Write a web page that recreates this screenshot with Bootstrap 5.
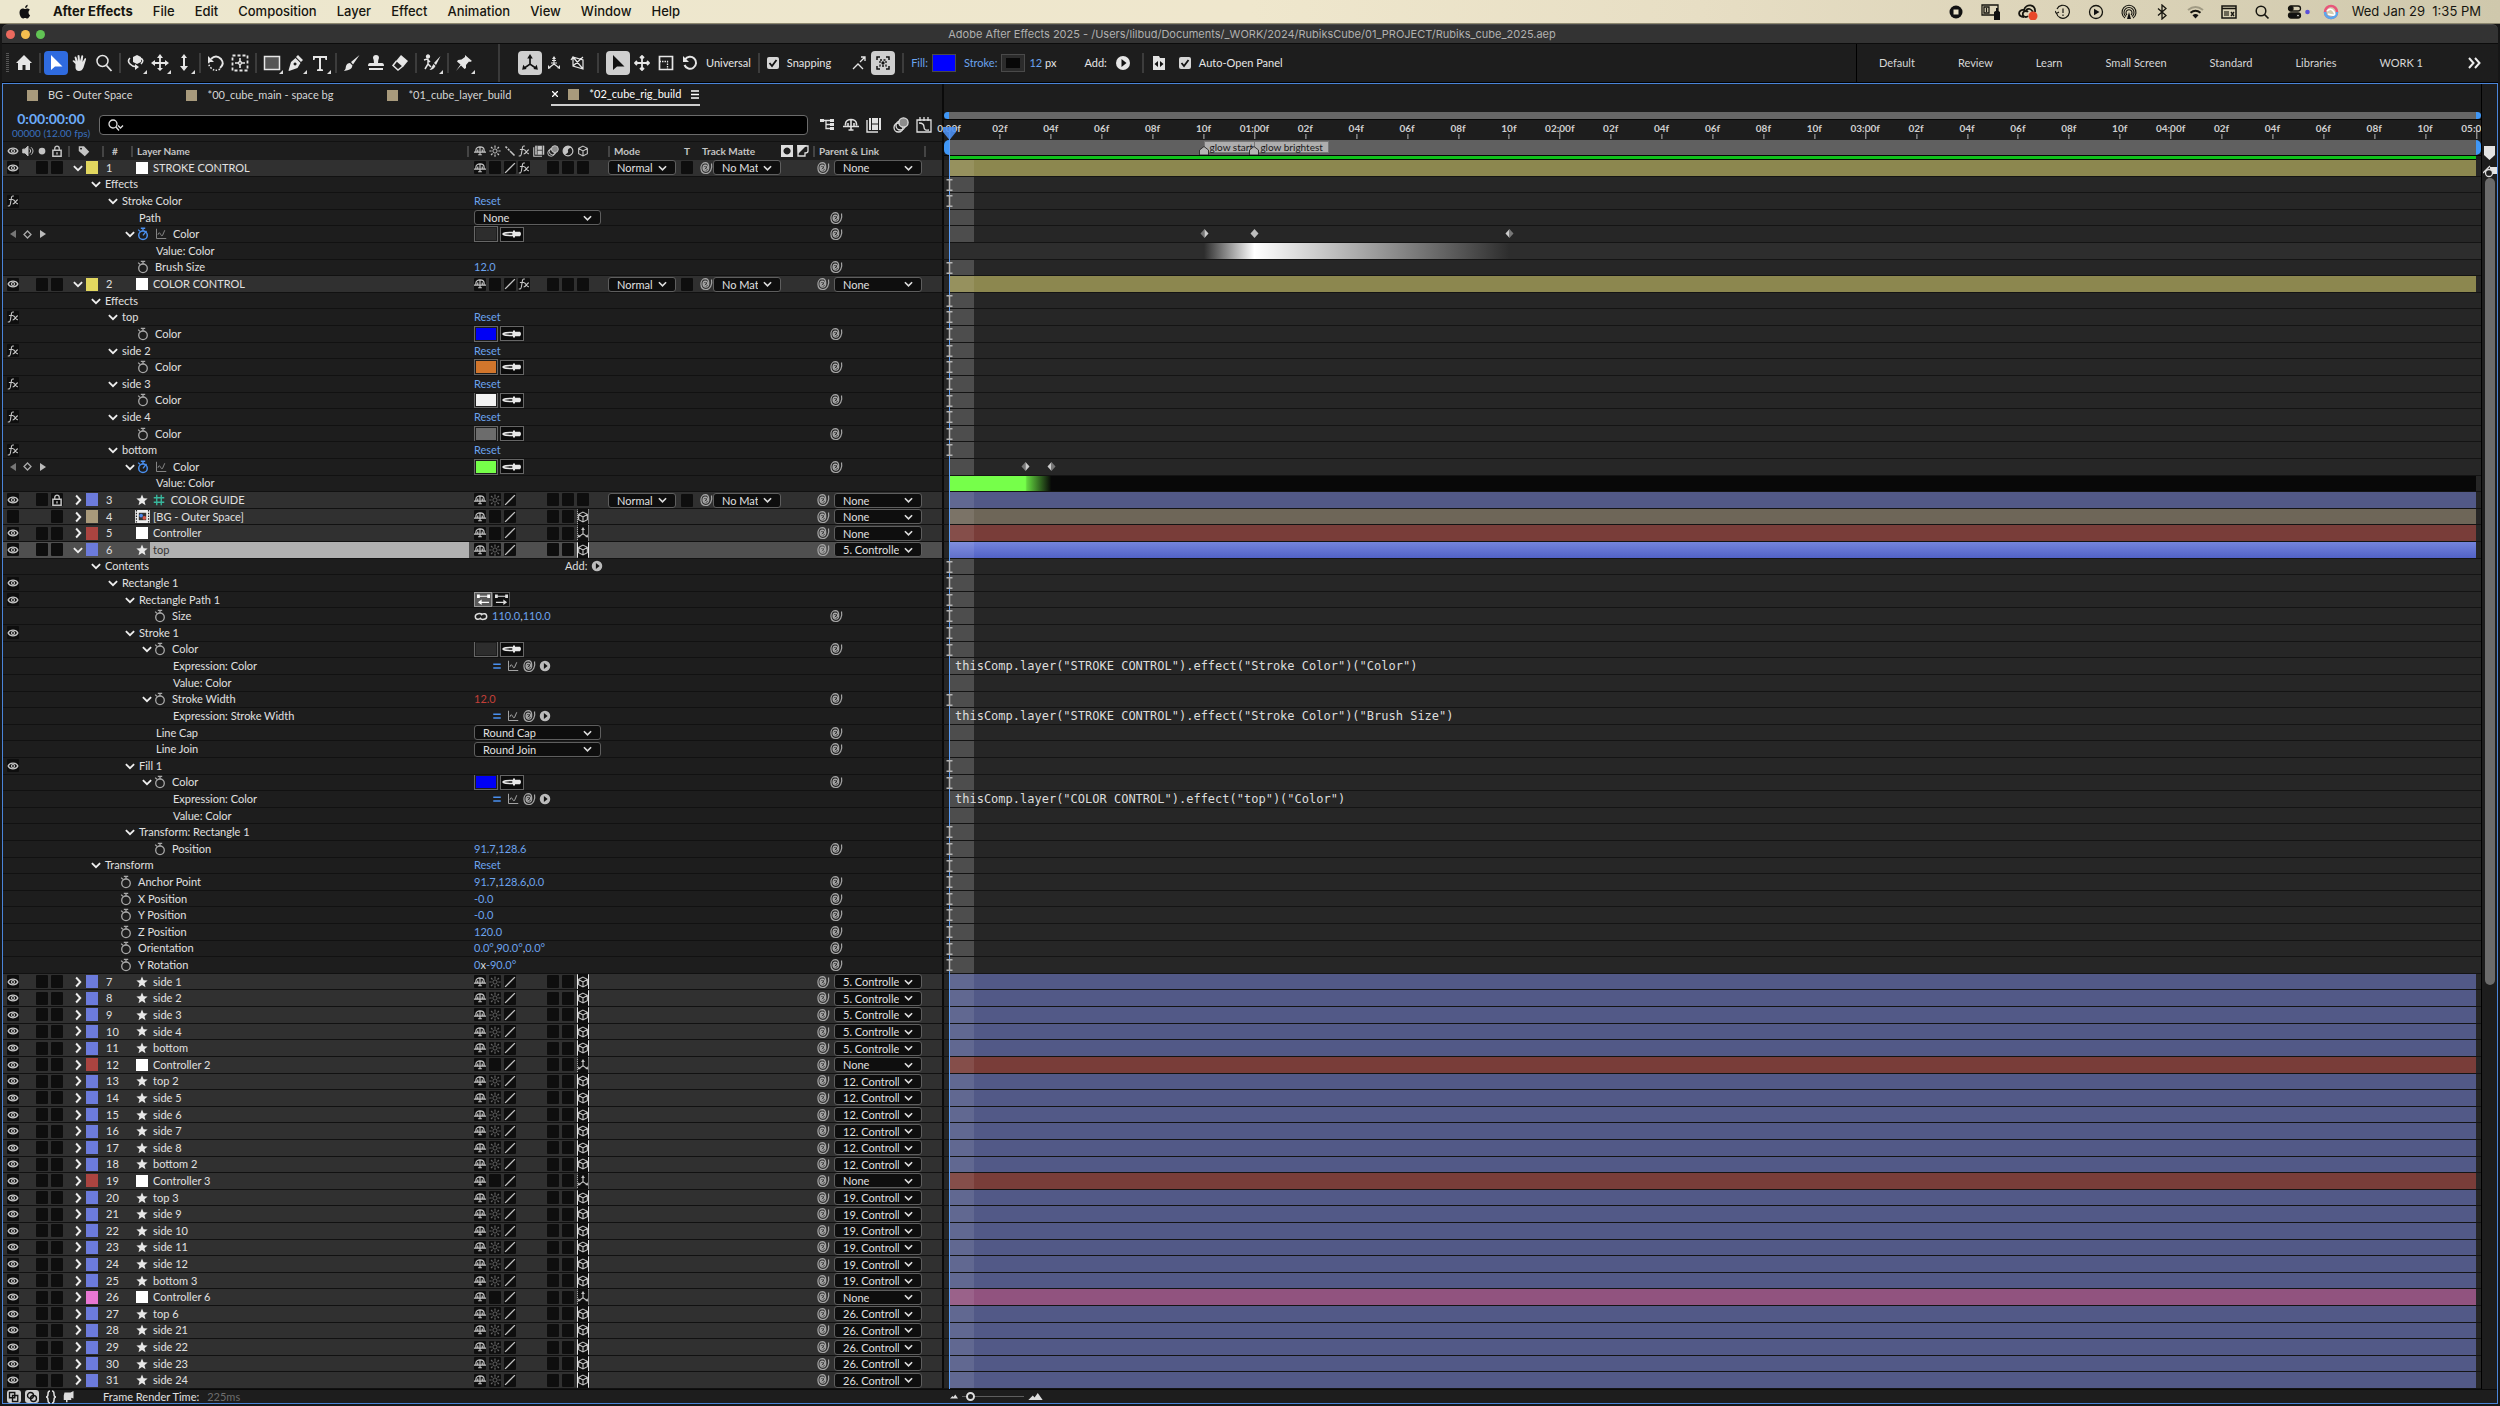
<!DOCTYPE html>
<html lang="en">
<head>
<meta charset="utf-8">
<meta name="viewport" content="width=device-width, initial-scale=1">
<title>Adobe After Effects 2025</title>
<link href="https://cdn.jsdelivr.net/npm/bootstrap@5.3.0/dist/css/bootstrap.min.css" rel="stylesheet">
<style>
:root{--ui:Lato,"Noto Sans",sans-serif;--sys:Inter,"Liberation Sans",sans-serif;--link:#6ba3ee;--left:939px}
html,body{height:100%}
body{background:#161616;color:#e0e0e0;font:11px/16px var(--ui);overflow:hidden}
button,select,input{font:inherit;color:inherit}
button{background:none;border:0;padding:0;display:inline-flex;align-items:center;justify-content:center;flex:none}
a{color:var(--link);text-decoration:none}
svg{display:block;flex:none;fill:none;stroke:currentColor;stroke-width:1.3}
.ic{width:16px;height:16px}
.ic-s{width:12px;height:12px}
.ic-l{width:18px;height:18px}

.menubar{height:24px;padding:0 19px 0 17px;background:linear-gradient(90deg,#ece7ce,#efe7cd 50%,#e7dec4 68%,#cfc8ac);color:#16150f;font:500 13px/23px var(--sys);border-bottom:1px solid #8c876f;gap:20px}
.menubar a{color:inherit}
.menubar .tray{gap:17px}
.menubar .tray .end{gap:13px;font-weight:400}
.titlebar{height:20px;margin:0 2px;background:#333;border-top:1px solid #4a4a4a;border-radius:6px 6px 0 0;border-bottom:1px solid #0c0c0c;font:11px/18px var(--sys);color:#b0b0b0}
.lights{gap:6px;padding-left:4px;width:0}
.lights i{width:9px;height:9px;border-radius:50%;flex:none}

.toolbar{height:39px;margin:0 2px;background:#1d1d1d;border-bottom:1px solid #000;color:#e6e6e6}
.toolbar .tool{width:24px;height:24px;border-radius:4px;position:relative}
.toolbar .tool.more::after{content:"";position:absolute;right:1px;bottom:1px;border:2px solid;border-color:transparent #ddd #ddd transparent}
.tool.on{background:#2f6bdf;color:#fff}
.tool.lit{background:#cfcfcf;color:#111}
.vsep{width:8px;height:20px;background:linear-gradient(#3c3c3c,#3c3c3c) center/2px 100% no-repeat;flex:none}
.grip{width:10px;height:20px;background:repeating-linear-gradient(#555 0 1px,transparent 1px 2px) center/3px 100% no-repeat}
.vbar{width:2px;align-self:stretch;background:#3a3a3a;margin:0 18px 0 22px}
.chk{appearance:none;width:12px;height:12px;border-radius:2px;margin:0;background:#d6d6d6 url("data:image/svg+xml,%3Csvg xmlns='http://www.w3.org/2000/svg' viewBox='0 0 12 12'%3E%3Cpath d='M2.500 6l2.500 3 4.500-6' fill='none' stroke='%23111' stroke-width='1.800'/%3E%3C/svg%3E");flex:none}
.bigsw{width:24px;height:18px;border:1px solid #4a4a4a}
.spaces{border-left:1px solid #000;padding-left:22px;gap:43px;align-self:stretch}
.spaces a{color:#d6d6d6}

.panel{margin:0 2px 2px;border:1px solid #4a84d8;background:#1d1d1d;min-height:0}
.leftcol{width:var(--left);flex:none}
.tabs{height:24px;padding-left:24px}
.tabs .comp{width:11px;height:11px;background:#a89a7c;flex:none}
.tabs a{color:#d6d6d6;gap:10px;height:22px}
.tabs a+a{margin-left:54px}
.tabs a.cur{color:#fff;border-bottom:2px solid #cfcfcf;padding:0 1px;margin-left:40px}
.srow{height:33px}
.tc{width:96px;text-align:center;color:#6cabf8}
.tc b{font-size:14px;line-height:17px;font-weight:700}
.tc .fps{font-size:10px;line-height:12px;color:#3a70bf}
.search{width:709px;height:20px;border:1px solid #6b6b6b;border-radius:4px;background:#000}
.search input{background:none;border:0;outline:0;width:100%;height:16px;padding:0 4px}
.hdr{height:19px;border-top:1px solid #111;font-size:10px;font-weight:700;color:#c4c4c4}
.hsep{width:2px;height:11px;background:#444;flex:none}

.line{flex:1 1 0;min-height:0}
.line>.leftcol{border-bottom:1px solid #111;background:#1d1d1d;overflow:hidden}
.line.layer>.leftcol{background:#303030}
.line.sel>.leftcol{background:#4f4f4f}
.av{width:58px;margin-left:3px;flex:none}
.av>*,.sws>*{flex:1 1 0;min-width:0;display:flex;align-items:center;justify-content:center}
.sws{width:117px;flex:none}
.bx{width:12px;height:13px;background:#0e0e0e;border-radius:1px;display:flex;align-items:center;justify-content:center;color:#c4c4c4;flex:none}
.bx.dim{color:#666}
.tw{width:14px;height:14px;margin-left:7px;color:#eee}
.lb{width:12px;height:13px;flex:none;margin-left:1px}
.num{width:36px;padding-left:8px;flex:none}
.lic{width:16px;flex:none;display:flex;justify-content:center;color:#e8e8e8}
.nul{width:12px;height:12px;background:#fff}
.nm{flex:1;min-width:0;padding-left:3px;white-space:nowrap;align-self:stretch;display:flex;align-items:center;gap:3px;margin-right:4px}
.sel .nm{background:#b0b0b0;color:#333}
.c3{position:relative;height:16px;border:solid #e6e6e6;border-width:0 1px}
.c3.dot{border-style:dotted}
.modes{width:173px;margin-left:18px;flex:none}
.tb{width:22px;justify-content:center;flex:none}
.par{width:127px;margin-left:34px;flex:none}
.hdr .par{width:143px;margin-left:0}
.sp{color:#a6a6a6}
.dd{appearance:none;height:15px;border:1px solid #5e5e5e;border-radius:3px;background:#0e0e0e url("data:image/svg+xml,%3Csvg xmlns='http://www.w3.org/2000/svg' viewBox='0 0 10 6'%3E%3Cpath d='M1 1l4 4 4-4' fill='none' stroke='%23ddd' stroke-width='1.800'/%3E%3C/svg%3E") right 8px center/9px 6px no-repeat;color:#e0e0e0;padding:0 22px 0 8px;line-height:13px;flex:none;overflow:hidden}
.dd.m{width:68px}.dd.p{width:88px}.dd.w{width:127px}
.tree{flex:1;min-width:0;white-space:nowrap}
.gut{width:18px;flex:none;display:flex;justify-content:center;color:#eee}
.sw{width:14px;margin-left:-3px;margin-right:5px;color:#a8a8a8;flex:none}
.sw.key{color:#4a90f0}
.val{width:354px;flex:none;color:#ddd;white-space:nowrap}
.val button{color:var(--link)}
.val .red{color:#c23f38}
.val .cs{width:24px;height:16px;border:1px solid #666;padding:1px;background:#1d1d1d;margin-right:2px}
.cs i{display:block;width:100%;height:100%}
.val .ed{width:24px;height:15px;border:1px solid #666;background:#0b0b0b;color:#e8e8e8}
.val .pt{width:18px;height:15px;border:1px solid #555;background:#111;color:#ddd}
.val .pt.on{background:#5a5a5a;border-color:#999;color:#fff}
.val .exb{width:16px;color:#a8a8a8;justify-content:center}
.val .go{color:#bbb}
.spc{width:16px;flex:none;color:#a6a6a6;margin-right:98px}

.track{flex:1;min-width:0;border-left:2px solid #0a0a0a;border-bottom:1px solid #141414;background:#262626;padding:0 5px;position:relative}
.canvas{flex:1;position:relative;align-self:stretch}
.cell{position:absolute;left:0;top:0;bottom:0;width:calc(100%/60);background:rgba(255,255,255,.18)}
.fill .cell{background:rgba(255,255,255,.09)}
.ib{position:absolute;left:-3px;top:2px;width:7px;height:12px;color:#b4b4b4;z-index:4}
.kf{position:absolute;top:3px;width:9px;height:9px;margin-left:-4px;color:#bdbdbd}
.expr{position:relative;padding-left:6px;font:12px/16px "DejaVu Sans Mono",monospace;color:#ddd;white-space:pre}
.ramp{background:linear-gradient(90deg,#2d2d2d 16.7%,#fff 20%,#2d2d2d 36.7%)}
.ramp2{background:linear-gradient(90deg,#76ff4a 5%,#62d63e 5.1%,#080808 6.7%)}

.rcol{flex:1;min-width:0;position:relative;clip-path:inset(0 0 0 -10px);border-left:2px solid #0a0a0a}
.nav1{height:8px;margin:28px 0 0;background:#1d1d1d}
.nav1 i,.wa i{background:#3f97f7;width:5px;flex:none}
.nav1 b,.wa b{flex:1;background:#666}
.wa b{background:#606060}
.nav1,.wa,.green{border-bottom:1px solid #050505}
.ruler{height:20px;margin:0 5px;position:relative;font-size:10px;font-weight:700;color:#d0d0d0}
.tick{position:absolute;top:0;transform:translateX(-50%);line-height:17px;height:20px}
.tick::after{content:"";position:absolute;left:50%;bottom:1px;height:5px;width:1px;background:#bbb}
.tick.s::after{height:9px}
.wa{height:16px;position:relative}
.mk{position:absolute;top:1px;height:12px;background:#aeaeae;border:1px solid #777;color:#1a1a1a;font-size:10px;line-height:10px;padding:0 5px;white-space:nowrap}
.mkp{position:absolute;top:6px;width:10px;height:9px;margin-left:-5px}
.green{height:4px;margin:0 5px;background:#10c21c}
.head{position:absolute;left:946px;top:43px;bottom:14px;width:1px;background:#5a9cf5;z-index:3}
.head svg{position:absolute;left:-6px;top:0;width:13px;height:13px}
.gutter{width:16px;flex:none;border-left:1px solid #000}
.gutter .thumb{width:10px;height:65.7%;border-radius:5px;background:#6b6b6b}
.foot{height:14px;border-top:1px solid #0a0a0a}
.foot button{color:#ddd}
.foot .lit{background:#cfcfcf;color:#111;border-radius:3px;width:14px;height:13px}
.zoomer{appearance:none;width:62px;height:8px;background:linear-gradient(#5e5e5e,#5e5e5e) center/100% 1px no-repeat;margin:0 4px}
.zoomer::-webkit-slider-thumb{appearance:none;width:9px;height:9px;border-radius:50%;border:2px solid #ddd;background:#1d1d1d}
</style>
<script src="https://cdn.jsdelivr.net/npm/bootstrap@5.3.0/dist/js/bootstrap.bundle.min.js"></script>
</head>
<body class="d-flex flex-column">
<svg width="0" height="0" class="position-absolute" aria-hidden="true"><defs>
<symbol id="eye" viewBox="0 0 16 16"><path stroke-width="1.800" d="M1.500 8C4 3 12 3 14.500 8C12 13 4 13 1.500 8Z"/><circle cx="8" cy="8" r="2" stroke-width="1.600"/></symbol>
<symbol id="spk" viewBox="0 0 16 16"><path fill="currentColor" d="M1 5.500h3l4-4v13l-4-4H1Z"/><path d="M10 5c2 2 2 4 0 6M12 3c3.500 3 3.500 7 0 10"/></symbol>
<symbol id="dot" viewBox="0 0 16 16"><circle cx="8" cy="8" r="4.500" fill="currentColor" stroke="none"/></symbol>
<symbol id="lock" viewBox="0 0 16 16"><path d="M2.500 7h11v8h-11Z" stroke-width="2"/><path stroke-width="1.800" d="M5 7V4.500a3 3 0 0 1 6 0V7M8 9.500v3"/></symbol>
<symbol id="tag" viewBox="0 0 16 16"><path fill="currentColor" fill-rule="evenodd" stroke="none" d="M1 1.500h7L15 9l-6 6L1 8ZM4 3.500a1.300 1.300 0 1 0 .1 0Z"/></symbol>
<symbol id="dn" viewBox="0 0 16 16"><path stroke-width="2.400" d="M2.500 5.500L8 11l5.500-5.500"/></symbol>
<symbol id="rt" viewBox="0 0 16 16"><path stroke-width="2.600" d="M5.500 2L11 8l-5.500 6"/></symbol>
<symbol id="star" viewBox="0 0 16 16"><path fill="currentColor" stroke="none" d="M8 .5l2.100 5.200 5.400.4-4.200 3.500 1.400 5.400L8 12l-4.700 3 1.400-5.400L.5 6.100l5.400-.4Z"/></symbol>
<symbol id="cmp" viewBox="0 0 16 14"><path fill="#eee" stroke="none" d="M0 0h16v14H0Z"/><path stroke="#222" stroke-dasharray="1.500 1.500" d="M1.500 0v14M14.500 0v14"/><path fill="#333" stroke="none" d="M4 3h8v8H4Z"/><circle cx="6.500" cy="6" r="2" fill="#4a86e8" stroke="none"/><circle cx="10" cy="8.500" r="2" fill="#d2554a" stroke="none"/></symbol>
<symbol id="hash" viewBox="0 0 16 16"><path stroke="#38b79d" stroke-width="1.800" d="M5 1v14M11 1v14M1 5h14M1 11h14"/></symbol>
<symbol id="shy" viewBox="0 0 16 16"><path stroke-width="1.600" d="M2.500 8.500V7C2.500 1 13.500 1 13.500 7v1.500M0 9.500h16M8 2v11M5 6v3M11 6v3M5.500 13h5"/></symbol>
<symbol id="sun" viewBox="0 0 16 16"><circle cx="8" cy="8" r="2.800"/><path stroke-width="1.600" d="M8 .5v3M8 12.500v3M.5 8h3M12.500 8h3M2.700 2.700l2 2M11.300 11.300l2 2M13.300 2.700l-2 2M4.700 11.300l-2 2"/></symbol>
<symbol id="qual" viewBox="0 0 16 16"><path stroke-width="1.800" d="M1.500 14.500L14.500 1.500"/></symbol>
<symbol id="qh" viewBox="0 0 16 16"><path stroke-width="2.200" stroke-dasharray="3 1.500" d="M2 2l6 6"/><path stroke-width="2.200" d="M8 8l6 6"/></symbol>
<symbol id="fx" viewBox="0 0 16 16"><path stroke-width="1.500" d="M9 1.500C6 .5 6 3 5.500 6L4.500 12c-.5 2.500-1.500 3-3.500 2.500M2.500 6h5.500M8 6.500c2.500-1 3 6 6.500 5M14.500 6.500C12 6 11 12 7.500 12"/></symbol>
<symbol id="film" viewBox="0 0 16 16"><path d="M1 3v12h11" stroke-width="1.400"/><path fill="currentColor" stroke="none" d="M3 1h12v12H3Z"/><path stroke="#1d1d1d" d="M5.500 1v12M12.500 1v12M5.500 7h7" stroke-width="1"/><path stroke="currentColor" stroke-dasharray="1 1" d="M4 1v12M14 1v12"/></symbol>
<symbol id="mb" viewBox="0 0 16 16"><circle cx="5.500" cy="10.500" r="4.500"/><circle cx="7.500" cy="8.500" r="4.500"/><circle cx="10.500" cy="5.500" r="4.600" fill="#8d8d8d"/></symbol>
<symbol id="adj" viewBox="0 0 16 16"><circle cx="8" cy="8" r="6.500" stroke-width="1.600"/><path fill="currentColor" stroke="none" d="M3.400 12.600A6.500 6.500 0 0 1 12.600 3.400Q7 5 8 8T3.400 12.600Z"/></symbol>
<symbol id="cube" viewBox="0 0 16 16"><path stroke-width="1.500" d="M8 1.500l5.800 3v7L8 14.500l-5.800-3v-7ZM2.200 4.500L8 8l5.800-3.500M8 8v6.500"/></symbol>
<symbol id="ax" viewBox="0 0 16 16"><path stroke-width="1.500" d="M8 3v6M8 9l-5 3.500M8 9l5 3.500"/><path fill="currentColor" stroke="none" d="M8 0l2.500 4h-5ZM1 14l1-4.500 3 3.800ZM15 14l-1-4.500-3 3.800Z"/></symbol>
<symbol id="spi" viewBox="0 0 16 16"><path stroke-width="1.200" d="M8 7.200a1.200 1.200 0 1 0 .2 2C10.500 8.500 9.800 5.200 7.300 5.200C4.200 5.500 4.200 11 7.800 11.200C11.800 11 11.800 2.800 7.300 2.700C1.300 3 1.500 13.300 7.700 13.500C12.500 13.500 14.500 8 13.500 3.500"/></symbol>
<symbol id="stop" viewBox="0 0 14 16"><circle cx="7" cy="9.500" r="4.900" stroke-width="1.500"/><path stroke-width="1.500" d="M4.500 1.500h5M7 1.500v3M1.500 3l2 2"/></symbol>
<symbol id="stopk" viewBox="0 0 14 16"><circle cx="7" cy="9.500" r="4.900" stroke-width="1.700"/><path stroke-width="1.600" d="M4.500 1.500h5M7 1.500v3M1.500 3l2 2M7 9.500L11 4.500"/></symbol>
<symbol id="graph" viewBox="0 0 16 16"><path stroke-width="1.300" d="M2 1v13h13M4 9c2-8 4 4 6 1l3-7"/></symbol>
<symbol id="play" viewBox="0 0 16 16"><circle cx="8" cy="8" r="7" fill="currentColor" stroke="none"/><path fill="#111" stroke="none" d="M6.500 4l5 4-5 4Z"/></symbol>
<symbol id="eq" viewBox="0 0 16 16"><path stroke="#4a90f0" stroke-width="2" d="M3 5.500h10M3 10.500h10"/></symbol>
<symbol id="drop" viewBox="0 0 20 10"><path stroke-width="1.400" d="M1 5c1-1.500 3-1.500 10-1.500v3C4 6.500 2 6.500 1 5Z"/><path fill="currentColor" stroke="none" d="M11 1.500h2v1.300h5q2 2.200 0 4.400h-5v1.300h-2Z"/></symbol>
<symbol id="link" viewBox="0 0 16 10"><path stroke-width="1.700" d="M9.500 3C7.500 1 1.500 1 1.500 5S6 9 8 6.500M6.500 7C8.500 9 14.500 9 14.500 5S10 1 8 3.500"/></symbol>
<symbol id="pl" viewBox="0 0 16 14"><path stroke-width="1.300" d="M2 3.500h12M4 10h10"/><path fill="currentColor" stroke="none" d="M1 1.500h3v4H1ZM12 1.500h3v4h-3ZM2 10l4-3v6Z"/></symbol>
<symbol id="pr" viewBox="0 0 16 14"><path stroke-width="1.300" d="M2 3.500h12M2 10h10"/><path fill="currentColor" stroke="none" d="M1 1.500h3v4H1ZM12 1.500h3v4h-3ZM14 10l-4-3v6Z"/></symbol>
<symbol id="ibm" viewBox="0 0 7 12"><path stroke-width="1.500" d="M.5 .8h6M.5 11.200h6M3.500 1v10"/></symbol>
<symbol id="kl" viewBox="0 0 9 9"><path fill="#777" stroke="none" d="M4.500 0v9L.5 4.500Z"/><path fill="#ccc" stroke="none" d="M4.500 0v9l4-4.500Z"/></symbol>
<symbol id="kr" viewBox="0 0 9 9"><path fill="#ccc" stroke="none" d="M4.500 0v9L.5 4.500Z"/><path fill="#777" stroke="none" d="M4.500 0v9l4-4.500Z"/></symbol>
<symbol id="kd" viewBox="0 0 9 9"><path fill="#bdbdbd" stroke="none" d="M4.500 0l4 4.500-4 4.500-4-4.500Z"/></symbol>
<symbol id="mtn" viewBox="0 0 16 10"><path fill="#ddd" stroke="none" d="M0 9l5-5 2 2 3.500-5L16 9Z"/></symbol>
<symbol id="cursor" viewBox="0 0 18 18"><path fill="currentColor" stroke="none" d="M4 1v15l4-3.500h7.500Z"/></symbol>
</defs></svg>

<nav class="menubar d-flex align-items-center" aria-label="Menu bar">
  <svg class="ic" viewBox="0 0 16 16"><path fill="#111" stroke="none" d="M11.500 8.300c0-1.700 1.300-2.500 1.400-2.600-.8-1.100-2-1.300-2.400-1.300-1 0-2 .6-2.500.6S6.700 4.400 5.800 4.400C4.300 4.500 2.500 5.600 2.500 8.500c0 3 2 6 3.500 6 .8 0 1.100-.5 2.100-.5s1.300.5 2.100.5c1.300 0 2.500-2.100 2.900-3.300-1.100-.5-1.600-1.600-1.600-2.900ZM9.900 3.300C10.500 2.500 10.800 1.500 10.700.8c-.9 0-2.700 1-2.600 3.200.8 0 1.400-.3 1.800-.7Z"/></svg>
  <a href="#" class="fw-bold">After Effects</a><a href="#">File</a><a href="#">Edit</a><a href="#">Composition</a><a href="#">Layer</a><a href="#">Effect</a><a href="#">Animation</a><a href="#">View</a><a href="#">Window</a><a href="#">Help</a>
  <div class="tray d-flex align-items-center ms-auto">
    <svg class="ic" viewBox="0 0 16 16"><circle cx="8" cy="8" r="6.500" fill="#111" stroke="none"/><path fill="#e8e0c6" stroke="none" d="M5.500 5.500h5v5h-5Z"/></svg>
    <svg width="20" height="16" viewBox="0 0 20 16"><path d="M1 1h16v10H1ZM3 3h5v6H3ZM5.500 4v4"/><path fill="#111" stroke="none" d="M13 8q3-3 6 0v8h-6ZM15 4h2v3h-2Z"/></svg>
    <svg width="20" height="16" viewBox="0 0 20 16"><path stroke-width="1.800" d="M6 13C-1 13 0 5 6 6C8-1 18 0 17 8M10 8a3 3 0 1 0 0 4M8 6q4-3 7 2"/><circle cx="15" cy="12" r="4.500" fill="#e8482a" stroke="none"/></svg>
    <svg class="ic" viewBox="0 0 16 16"><path stroke-width="1.200" d="M2 5A6.500 6.500 0 1 1 1.500 9M0 7l1.500 2.500L4 8M8 4.500v4.500M8 10.500v1.500"/></svg>
    <svg class="ic" viewBox="0 0 16 16"><circle cx="8" cy="8" r="6.500"/><path fill="#111" stroke="none" d="M6 4.700l5.500 3.300L6 11.300Z"/></svg>
    <svg class="ic" viewBox="0 0 16 16"><path stroke-width="1.100" d="M4 14A7 7 0 1 1 12 14M5 12.500A5 5 0 1 1 11 12.500M6 11A3 3 0 1 1 10 11"/><path fill="#111" stroke="none" d="M8 8l2 7H6Z"/></svg>
    <svg class="ic" viewBox="0 0 16 16"><path d="M4 4.500l8 7-4 3.500V1l4 3.500-8 7"/></svg>
    <svg width="17" height="16" viewBox="0 0 17 16"><path stroke="#a19b84" stroke-width="2" d="M1 6q7.500-6 15 0"/><path stroke-width="2" d="M3.500 8.800q5-4 10 0"/><path fill="#111" stroke="none" d="M5.500 11.200q3-2.500 6 0L8.500 14.500Z"/></svg>
    <svg class="ic" viewBox="0 0 16 16"><path d="M1 2h14v12H1ZM1 4.500h14" stroke-width="1.500"/><path d="M10 8l3 4M13 8l-3 4"/><path fill="#6a6655" stroke="none" d="M3 7h5v5H3Z"/></svg>
    <svg class="ic" viewBox="0 0 16 16"><circle cx="7" cy="7" r="4.800" stroke-width="1.500"/><path stroke-width="1.700" d="M10.500 10.500l4 4"/></svg>
    <div class="end d-flex align-items-center">
      <svg width="23" height="16" viewBox="0 0 23 16"><rect x="1.500" y="2" width="12" height="5" rx="2.500"/><circle cx="4" cy="4.500" r="2" fill="#111"/><rect x="1.500" y="9" width="12" height="5" rx="2.500" fill="#111"/><circle cx="11" cy="11.500" r="1.500" fill="#ddd"/><circle cx="20.500" cy="8" r="2.300" fill="#5a50d8" stroke="none"/></svg>
      <svg class="ic" viewBox="0 0 16 16"><circle cx="8" cy="8" r="6" stroke="#e8557a" stroke-width="2.500"/><path stroke="#5aa8ee" stroke-width="2.500" d="M2 8a6 6 0 0 0 12 0"/><path stroke="#fff" stroke-width="1.600" d="M4 7q4-4 7 1t-6 2"/></svg>
      <span>Wed Jan 29&nbsp; 1:35 PM</span>
    </div>
  </div>
</nav>

<header class="titlebar d-flex align-items-center">
  <div class="lights d-flex"><i style="background:#ec6a5e"></i><i style="background:#f4be4f"></i><i style="background:#61c454"></i></div>
  <div class="flex-fill text-center">Adobe After Effects 2025 - /Users/lilbud/Documents/_WORK/2024/RubiksCube/01_PROJECT/Rubiks_cube_2025.aep</div>
</header>

<div class="toolbar d-flex align-items-center" role="toolbar" aria-label="Tools">
  <div class="grip"></div><div id="tools" class="d-flex align-items-center"></div>
  <div class="vbar"></div>
  <div class="d-flex align-items-center">
    <button class="tool lit" aria-label="Local axis"><svg class="ic-l" viewBox="0 0 16 16"><use href="#ax"/></svg></button>
    <button class="tool" aria-label="World axis"><svg class="ic" viewBox="0 0 16 16"><path stroke-width="1.200" d="M8 4v5M8 9l-4 3M8 9l4 3M5 8h6M6 5.500h4"/><path fill="currentColor" stroke="none" d="M8 1l2 3H6ZM2 14v-4l3 3ZM14 14v-4l-3 3Z"/></svg></button>
    <button class="tool" aria-label="View axis"><svg class="ic" viewBox="0 0 16 16"><path stroke-width="1.200" d="M3 2l10 3v9L3 11ZM3 11L13 2M3 2l10 12M1 5l2-3 3 1"/></svg></button>
    <div class="vsep mx-1"></div>
    <button class="tool lit" aria-label="Selection"><svg class="ic-l"><use href="#cursor"/></svg></button>
    <button class="tool" aria-label="Position"><svg class="ic" viewBox="0 0 16 16"><path stroke-width="1.800" d="M8 1v14M1 8h14M6 3l2-2 2 2M6 13l2 2 2-2M3 6L1 8l2 2M13 6l2 2-2 2"/></svg></button>
    <button class="tool" aria-label="Scale"><svg class="ic" viewBox="0 0 16 16"><path stroke-width="1.700" d="M1.500 1.500h13v13h-13Z"/><path d="M1.500 6.500h8v8" stroke-dasharray="1.500 1"/></svg></button>
    <button class="tool" aria-label="Rotation"><svg class="ic" viewBox="0 0 16 16"><path stroke-width="2" d="M3 4.500A6 6 0 1 1 2.500 10"/><path fill="currentColor" stroke="none" d="M1 1v6h6Z"/></svg></button>
    <span class="ms-1">Universal</span>
    <div class="vsep mx-1"></div>
    <input class="chk" type="checkbox" checked id="snap"><label class="ms-2" for="snap">Snapping</label>
    <button class="tool ms-3" aria-label="Snap along edges"><svg class="ic" viewBox="0 0 16 16"><path d="M2 14l5-5 5 5M9 7l5-5M10 2h4v4"/></svg></button>
    <button class="tool lit" aria-label="Snap to features"><svg class="ic" viewBox="0 0 16 16"><path stroke-width="1.500" d="M2 5V2h3M11 2h3v3M14 11v3h-3M5 14H2v-3"/><path stroke-dasharray="2 1.500" d="M5 5h6v6H5Z"/><circle cx="8" cy="8" r="1" fill="#111"/></svg></button>
    <div class="vsep mx-1"></div>
    <a href="#">Fill:</a><button class="bigsw ms-1" style="background:#00f" aria-label="Fill colour"></button>
    <a href="#" class="ms-2">Stroke:</a><button class="bigsw ms-1" style="background:#2b2b2b" aria-label="Stroke colour"><svg width="14" height="10"><path fill="#080808" stroke="none" d="M0 0h14v10H0Z"/></svg></button>
    <span class="ms-1"><a href="#">12</a> px</span>
    <span class="ms-4 ps-1">Add:</span><button class="tool ms-1" aria-label="Add"><svg class="ic"><use href="#play"/></svg></button>
    <div class="vsep ms-1"></div>
    <button class="tool" aria-label="Panel"><svg class="ic" viewBox="0 0 16 16"><path fill="#e2e2e2" stroke="none" d="M2 1h6l1 2h5v12H2Z"/><path fill="#111" stroke="none" d="M7 6v6L3.500 9ZM9 6v6l3.500-3Z"/></svg></button>
    <input class="chk ms-2" type="checkbox" checked id="auto"><label class="ms-2" for="auto">Auto-Open Panel</label>
  </div>
  <nav class="spaces d-flex align-items-center ms-auto pe-3" aria-label="Workspaces">
    <a href="#">Default</a><a href="#">Review</a><a href="#">Learn</a><a href="#">Small Screen</a><a href="#">Standard</a><a href="#">Libraries</a><a href="#">WORK 1</a>
    <button aria-label="More workspaces"><svg class="ic" viewBox="0 0 16 16"><path stroke="#eee" stroke-width="2" d="M3 3l4.500 5L3 13M9 3l4.500 5L9 13"/></svg></button>
  </nav>
</div>

<main class="panel flex-fill d-flex flex-column position-relative">
  <div class="d-flex">
    <div class="leftcol">
      <nav class="tabs d-flex" aria-label="Compositions">
        <a href="#" class="d-flex align-items-center"><i class="comp"></i>BG - Outer Space</a>
        <a href="#" class="d-flex align-items-center"><i class="comp"></i>*00_cube_main - space bg</a>
        <a href="#" class="d-flex align-items-center"><i class="comp"></i>*01_cube_layer_build</a>
        <a href="#" class="cur d-flex align-items-center"><svg width="6" height="6" viewBox="0 0 6 6"><path d="M0 0l6 6M6 0L0 6"/></svg><i class="comp"></i>*02_cube_rig_build<svg width="8" height="9" viewBox="0 0 8 9"><path d="M0 1h8M0 4.500h8M0 8h8"/></svg></a>
      </nav>
      <div class="srow d-flex align-items-center">
        <div class="tc d-flex flex-column"><b>0:00:00:00</b><span class="fps">00000 (12.00 fps)</span></div>
        <label class="search d-flex align-items-center ps-1"><svg class="ms-1" width="16" height="12" viewBox="0 0 16 12"><circle cx="5" cy="5" r="4"/><path d="M8 8l3 3.500M10 6.500l2.500 2.500L15 6.500"/></svg><input type="text" aria-label="Search layers"></label>
        <div class="d-flex ms-2 ps-1" style="gap:7px">
          <button aria-label="Mini-flowchart"><svg class="ic" viewBox="0 0 16 16"><path d="M1 3.500h9M6 3.500v8h4M6 7.500h4"/><path fill="currentColor" stroke="none" d="M0 2h4v3H0ZM10 2h4v3h-4ZM10 6h4v3h-4ZM10 10h4v3h-4Z"/></svg></button>
          <button aria-label="Hide shy layers"><svg class="ic"><use href="#shy"/></svg></button>
          <button aria-label="Frame blending"><svg class="ic"><use href="#film"/></svg></button>
          <button class="ms-1" aria-label="Motion blur"><svg class="ic"><use href="#mb"/></svg></button>
          <button aria-label="Graph editor"><svg class="ic" viewBox="0 0 16 16"><path d="M1 3h14v12H1ZM4 0v4M8 0v4M12 0v4M3 6q5 0 5 4t5 3"/></svg></button>
        </div>
      </div>
      <div class="hdr d-flex align-items-center">
        <div class="av d-flex"><span><svg class="ic-s"><use href="#eye"/></svg></span><span><svg class="ic-s"><use href="#spk"/></svg></span><span><svg class="ic-s"><use href="#dot"/></svg></span><span><svg class="ic-s"><use href="#lock"/></svg></span></div>
        <div class="d-flex align-items-center" style="width:67px"><i class="hsep ms-1"></i><svg class="ic-s ms-2 me-2"><use href="#tag"/></svg><i class="hsep ms-1"></i><span class="ms-1 ps-1">#</span></div>
        <div class="d-flex align-items-center flex-fill"><i class="hsep me-1"></i><span class="flex-fill">Layer Name</span><i class="hsep me-1"></i></div>
        <div class="sws d-flex"><span><svg class="ic-s"><use href="#shy"/></svg></span><span><svg class="ic-s"><use href="#sun"/></svg></span><span><svg class="ic-s"><use href="#qh"/></svg></span><span><svg class="ic-s"><use href="#fx"/></svg></span><span><svg class="ic-s"><use href="#film"/></svg></span><span><svg class="ic-s"><use href="#mb"/></svg></span><span><svg class="ic-s"><use href="#adj"/></svg></span><span><svg class="ic-s"><use href="#cube"/></svg></span></div>
        <div class="modes d-flex align-items-center"><span class="d-flex align-items-center" style="width:68px"><i class="hsep me-1"></i>Mode</span><span class="tb d-flex">T</span><span class="ps-1">Track Matte</span></div>
        <div class="par d-flex align-items-center"><svg class="ic-s" viewBox="0 0 12 12"><path fill="#ddd" stroke="none" fill-rule="evenodd" d="M0 0h12v12H0ZM6 2.500a3.500 3.500 0 1 0 .1 0Z"/></svg><svg class="ic-s ms-1" viewBox="0 0 12 12"><path stroke="#ddd" d="M1 1h10v5q0 2-3 2v3H1Z"/><path fill="#ddd" stroke="none" d="M0 0h10L1 9Z"/></svg><i class="hsep ms-1"></i><span class="ms-1 flex-fill">Parent &amp; Link</span></div>
        <i class="hsep me-3"></i>
      </div>
    </div>
    <div class="rcol">
      <div class="nav1 d-flex"><i class="rounded-start-pill"></i><b></b><i class="rounded-end-pill"></i></div>
      <div class="ruler" id="ruler"></div>
      <div class="wa d-flex"><i class="rounded-start"></i><b class="position-relative fw-normal" id="marks"></b><i class="rounded-end"></i></div>
      <div class="green"></div>
    </div>
    <div class="gutter d-flex flex-column align-items-center justify-content-end"><svg width="11" height="14" viewBox="0 0 11 14"><path fill="#e4e4e4" stroke="none" d="M0 0h11v9l-5.500 5L0 9Z"/></svg></div>
  </div>
  <div class="d-flex flex-fill" style="min-height:0">
    <div id="rows" class="flex-fill d-flex flex-column" style="min-width:0"></div>
    <div class="gutter d-flex flex-column align-items-center"><svg width="14" height="14" viewBox="0 0 14 14" class="mt-1"><path fill="#e4e4e4" stroke="none" d="M7 3h7v7H7Z"/><circle cx="6" cy="9" r="3.500" fill="#1d1d1d" stroke="#ddd"/><path d="M0 9l7-7" stroke="#ddd"/></svg><div class="thumb"></div></div>
  </div>
  <footer class="foot d-flex align-items-center">
    <div class="leftcol d-flex align-items-center ps-1">
    <button class="lit" aria-label="Switches"><svg class="ic-s" viewBox="0 0 16 16"><path stroke-width="1.800" d="M2 2h7v7H2ZM6 6h7v8H6Z"/></svg></button>
    <button class="lit ms-1" aria-label="Transfer controls"><svg class="ic-s" viewBox="0 0 16 16"><circle cx="6" cy="6" r="4" stroke-width="1.800"/><circle cx="10" cy="10" r="4" stroke-width="1.800"/></svg></button>
    <button class="ms-1" aria-label="In, out, duration"><svg class="ic" viewBox="0 0 16 16"><path stroke-width="1.500" d="M7 2Q5 2 5 5T3 8q2 0 2 3t2 3M9 2q2 0 2 3t2 3q-2 0-2 3t-2 3"/></svg></button>
    <button class="ms-1" aria-label="Render time"><svg class="ic-s" viewBox="0 0 16 16"><path fill="currentColor" stroke="none" d="M2 2h8l4-2v10l-3-1v3H6v3H4v-3H1V6Z"/></svg></button>
    <span class="ps-4 ms-1">Frame Render Time:</span><span class="ms-2" style="color:#6d6d6d">225ms</span>
    </div>
    <div class="d-flex align-items-center ms-2"><svg width="8" height="5"><use href="#mtn"/></svg><input class="zoomer" type="range" min="0" max="100" value="7" aria-label="Timeline zoom"><svg width="15" height="9"><use href="#mtn"/></svg></div>
  </footer>
  <div class="head"><svg viewBox="0 0 13 13"><path fill="#4c8ff0" fill-opacity=".9" stroke="none" d="M0 0h13v5L6.500 13 0 5Z"/></svg></div>
</main>

<script>
const ic=(n,c='ic-s')=>`<svg class="${c}"><use href="#${n}"/></svg>`;

/* main tools */
const T=(label,body,cls='')=>`<button class="tool ${cls}" aria-label="${label}"><svg class="ic-l" viewBox="0 0 18 18">${body}</svg></button>`, S='<div class="vsep"></div>';
document.getElementById('tools').innerHTML=[
T('Home','<path fill="currentColor" stroke="none" d="M9 1l8 8h-2v7h-4.500v-5h-3v5H3V9H1Z"/>'),S,
T('Selection','<use href="#cursor"/>','on'),
T('Hand','<path fill="currentColor" stroke="none" d="M4.500 10L1.500 7q1-1.500 3 .5L3.500 3q1.500-1 2 .5L7 7.500l-.5-6q1.500-1 2 0L9 7l1.500-5.500q1.500-.5 1.700.8L11.500 8l2.500-4q1.500 0 1 1.500l-2.500 8Q11 17 8 17T4.500 14Z"/>'),
T('Zoom','<circle cx="7.500" cy="7" r="5.500" stroke-width="1.500"/><path stroke-width="1.800" d="M11.500 11.500L16.500 17"/>'),S,
T('Orbit','<path stroke-width="1.600" d="M3 4Q0 7 3 10q3 3 6 2.500M14 10q4-4-1-6"/><path fill="currentColor" stroke="none" d="M6 3l4-2 4 2v5l-4 2-4-2ZM8 10l4 3-4 3Z"/>','more'),
T('Pan','<path stroke-width="1.800" d="M9 2v13M2 9h14"/><path fill="currentColor" stroke="none" d="M9 0l3 4H6ZM9 17l3-3H6ZM0 9l4-3v6ZM18 9l-4-3v6Z"/>','more'),
T('Dolly','<path stroke-width="2" d="M9 2v12"/><path fill="currentColor" stroke="none" d="M9 0l3 4H6ZM9 17l4-5H5Z"/>','more'),S,
T('Rotate','<path stroke-width="2" d="M4 5q5-5 10 0 4 5-1 9"/><path stroke-dasharray="1.500 1.500" stroke-width="1.600" d="M13 15Q8 18 4 14 1 11 2 8"/><path fill="currentColor" stroke="none" d="M1 2v6h6Z"/>'),
T('Pan behind','<path stroke-width="1.800" stroke-dasharray="3 2" d="M1.500 1.500h15v15h-15Z"/><circle cx="9" cy="9" r="1.500"/><path stroke-width="1.600" d="M9 4v3M9 11v3M4 9h3M11 9h3"/>'),S,
T('Rectangle','<path fill="#555" stroke-width="1.500" d="M1.500 2.500h15v13h-15Z"/>','more'),
T('Pen','<path fill="currentColor" fill-rule="evenodd" stroke="none" d="M11 1l5 5-2 2-5-5ZM8.500 4L13.500 9l-3 5L2 17l-.5-.5L4 8ZM8 8.500a1.500 1.500 0 1 0 .1 0Z"/>','more'),
T('Type','<path fill="currentColor" stroke="none" d="M2 2h14v4h-1.500l-.5-2h-4v11l2 .5V17H6v-1.500l2-.5V4H4l-.5 2H2Z"/>','more'),S,
T('Brush','<path fill="currentColor" stroke="none" d="M16.500 1L8 8l2 2.500ZM7 9l2.500 2.500Q9 16 1 17q2-2 2-5 1-3 4-3Z"/>'),
T('Clone stamp','<path fill="currentColor" stroke="none" d="M9 1a3 3 0 0 1 3 3Q11 6 11 9h4q2 0 2 3H1q0-3 2-3h4Q7 6 6 4a3 3 0 0 1 3-3ZM2 14h14v2H2Z"/>'),
T('Eraser','<path fill="currentColor" stroke="none" d="M10 1l7 6-5 6-7-6Z"/><path stroke-width="1.500" d="M5.500 7L2 11.500 7 16l5-4"/>'),S,
T('Roto brush','<path fill="currentColor" stroke="none" d="M17.500 2L11 9l2 2ZM10.500 10l2 2q-2 4-6 4 2-2 4-6Z"/><path stroke-width="1.500" d="M1 6l3-1 3 3M5 5v5l-3 5M5 10l3 3"/><circle cx="5" cy="2.500" r="1.500" fill="currentColor"/>','more'),S,
T('Puppet pin','<path fill="currentColor" stroke="none" d="M10 1l7 6-2 1-1-.5-3 3.500v3l-1.500 1L6 11.500 1 17l4.500-6.500L2 7.500 3 6l3.500-.5L10 3Z"/>','more')].join('');

/* time ruler: 60 frames at 12 fps, a label every second frame */
const pct=f=>(f/60*100).toFixed(3)+'%';
let r='';
for(let f=0;f<=60;f+=2){const s=f/12,m=f%12;
 r+=`<span class="tick ${m?'':'s'}" style="left:${pct(f)}">${m?String(m).padStart(2,'0')+'f':(f?'0'+s:'0')+':00f'}</span>`}
document.getElementById('ruler').innerHTML=r;
document.getElementById('marks').innerHTML=[[10,'glow start'],[12,'glow brightest']].map(([f,t])=>
 `<span class="mk" style="left:${pct(f)}">${t}</span><svg class="mkp" style="left:${pct(f)}" viewBox="0 0 10 9"><path fill="#b4b4b4" stroke="#333" stroke-width="1" d="M.5 9V4L5 .5 9.500 4v5Z"/></svg>`).join('');

/* rows */
const YE=['#e2d75f','#8c874f'],BL=['#6c7bdc','#525987'],TA=['#a99a7b','#6e6658'],RE=['#ab4440','#793d39'],PI=['#e877d3','#91537f'];
const bx=(c='',k='')=>`<span class="bx ${k}">${c}</span>`;
const dd=(c,t,l)=>`<select class="dd ${c}" aria-label="${l}"><option>${t}</option></select>`;
const track=(inner,o={})=>`<div class="track d-flex" ${o.bg?`style="background:${o.bg}"`:''}><div class="canvas ${o.cls||''}" ${o.st?`style="${o.st}"`:''}>${o.noc?'':'<i class="cell"></i>'}${inner}</div></div>`;
function layer(n,name,col,kind,parent,o={}){
 const nul=kind=='n',star=kind=='s',cmp=kind=='c';
 const icon=nul?'<i class="nul"></i>':star?ic('star','ic-s'):'<svg width="15" height="13"><use href="#cmp"/></svg>';
 const d3=nul?'ax':'cube';
 const bar=o.sel?'linear-gradient(#7484dc,#5262c6)':col[1];
 return `<div class="line layer d-flex ${o.sel?'sel':''}"><div class="leftcol d-flex align-items-center">
 <div class="av d-flex"><span>${bx(cmp?'':ic('eye'))}</span><span></span><span>${cmp?'':bx()}</span><span>${bx(n==3?ic('lock'):'')}</span></div>
 <button class="tw" aria-label="Twirl ${name}">${ic(o.open?'dn':'rt')}</button><i class="lb" style="background:${col[0]}"></i><span class="num">${n}</span><span class="lic">${icon}</span>
 <span class="nm">${n==3?ic('hash')+'&nbsp;':''}${name}</span>
 <div class="sws d-flex"><span>${bx(ic('shy'))}</span><span>${bx(star?ic('sun'):'','dim')}</span><span>${bx(ic('qual'))}</span><span>${n<3?bx(ic('fx')):''}</span><span></span><span>${bx()}</span><span>${bx()}</span><span>${n<4?bx():bx(ic(d3),'c3'+(star?'':' dot'))}</span></div>
 <div class="modes d-flex align-items-center">${n<4?dd('m','Normal','Mode')+'<span class="tb d-flex"><i class="bx"></i></span><span class="sp" style="width:15px">'+ic('spi','ic')+'</span>'+dd('m','No Mat','Track matte'):''}</div>
 <div class="par d-flex align-items-center"><span class="sp" style="width:19px">${ic('spi','ic')}</span>${dd('p',parent,'Parent')}</div></div>
 ${track('',{cls:'fill',st:`background:${bar}`})}</div>`}
/* property row: level, label, flags, value, track */
const eye=`<span>${bx(ic('eye'))}</span><span></span><span></span><span></span>`,
 fxa=`<span>${bx(ic('fx'))}</span><span></span><span></span><span></span>`,
 kfa=`<span style="color:#777"><svg width="7" height="8"><path fill="currentColor" stroke="none" d="M6 0v8L0 4Z"/></svg></span><span><svg width="9" height="9" viewBox="0 0 9 9"><path stroke="#aaa" d="M4.500 1L8 4.500 4.500 8 1 4.500Z"/></svg></span><span style="color:#bbb"><svg width="7" height="8"><path fill="currentColor" stroke="none" d="M1 0v8l6-4Z"/></svg></span><span></span>`;
function prop(lv,name,f,val='',tr,o={}){
 const has=c=>f.includes(c);
 const a=has('e')?eye:has('x')?fxa:has('k')?kfa:'';
 return `<div class="line d-flex"><div class="leftcol d-flex align-items-center"><div class="av d-flex">${a}</div>
 <div class="tree d-flex align-items-center" style="padding-left:${23+17*lv}px"><span class="gut">${has('t')?ic('dn'):''}</span>${has('s')?`<span class="sw ${has('k')?'key':''}"><svg width="14" height="14"><use href="#${has('k')?'stopk':'stop'}"/></svg></span>`:''}${has('k')?'<span style="width:18px;color:#888">'+ic('graph')+'</span>':''}${name}</div>
 <div class="val d-flex align-items-center">${val}</div><span class="spc">${has('p')?ic('spi','ic'):''}</span></div>
 ${tr!==undefined?track(tr,o):track(has('i')?'<svg class="ib"><use href="#ibm"/></svg>':'')}</div>`}
const reset='<a href="#">Reset</a>';
const sw=c=>`<button class="cs" aria-label="Colour"><i style="background:${c}"></i></button><button class="ed" aria-label="Eyedropper"><svg width="20" height="10"><use href="#drop"/></svg></button>`;
const nums=a=>a.map(x=>`<button>${x}</button>`).join(',');
const exb='<span style="width:15px"></span>'+['eq','graph','spi','play'].map(x=>`<button class="exb ${x=='play'?'go':''}" aria-label="${x}">${ic(x,x=='spi'?'ic':'ic-s')}</button>`).join('');
const ex=t=>`<div class="expr">${t}</div>`;
const kf=(f,k)=>`<svg class="kf" style="left:${pct(f)}"><use href="#${k}"/></svg>`;
const w=(t,l)=>dd('w',t,l);
const out=[
layer(1,'STROKE CONTROL',YE,'n','None',{open:1}),
prop(0,'Effects','ti'),
prop(1,'Stroke Color','txi',reset),
prop(2,'Path','p',w('None','Path')),
prop(2,'Color','tskp',sw('#2d2d2d'),kf(10,'kl')+kf(12,'kd')+kf(22,'kr')),
prop(3,'Value: Color','','','',{noc:1,bg:'#2d2d2d',cls:'ramp'}),
prop(2,'Brush Size','spi',nums(['12.0'])),
layer(2,'COLOR CONTROL',YE,'n','None',{open:1}),
prop(0,'Effects','ti')];
[['top','#0000f6'],['side 2','#d2762c'],['side 3','#f2f2f2'],['side 4','#6c6c6c']].forEach(([n,c])=>out.push(prop(1,n,'txi',reset),prop(2,'Color','spi',sw(c))));
out.push(prop(1,'bottom','txi',reset),
prop(2,'Color','tskp',sw('#76ff4a'),kf(3,'kl')+kf(4,'kr')),
prop(3,'Value: Color','','','',{noc:1,cls:'ramp2'}),
layer(3,'COLOR GUIDE',BL,'s','None'),
layer(4,'[BG - Outer Space]',TA,'c','None'),
layer(5,'Controller',RE,'n','None'),
layer(6,'top',BL,'s','5. Controller',{open:1,sel:1}),
prop(0,'Contents','ti','<span style="width:91px"></span><span>Add:</span><button class="go ms-1" aria-label="Add">'+ic('play')+'</button>'),
prop(1,'Rectangle 1','tei'),
prop(2,'Rectangle Path 1','tei','<button class="pt on" aria-label="Reverse path off"><svg width="15" height="13"><use href="#pl"/></svg></button><button class="pt" aria-label="Reverse path on"><svg width="15" height="13"><use href="#pr"/></svg></button>'),
prop(3,'Size','spi','<svg width="14" height="9" class="me-1"><use href="#link"/></svg>'+nums(['110.0','110.0'])),
prop(2,'Stroke 1','tei'),
prop(3,'Color','tspi',sw('#2d2d2d')),
prop(4,'Expression: Color','',exb,ex('thisComp.layer("STROKE CONTROL").effect("Stroke Color")("Color")')),
prop(4,'Value: Color',''),
prop(3,'Stroke Width','tspi','<button class="red">12.0</button>'),
prop(4,'Expression: Stroke Width','',exb,ex('thisComp.layer("STROKE CONTROL").effect("Stroke Color")("Brush Size")')),
prop(3,'Line Cap','p',w('Round Cap','Line cap')),
prop(3,'Line Join','p',w('Round Join','Line join')),
prop(2,'Fill 1','tei'),
prop(3,'Color','tspi',sw('#0000f6')),
prop(4,'Expression: Color','',exb,ex('thisComp.layer("COLOR CONTROL").effect("top")("Color")')),
prop(4,'Value: Color',''),
prop(2,'Transform: Rectangle 1','ti'),
prop(3,'Position','spi',nums(['91.7','128.6'])),
prop(0,'Transform','ti',reset),
prop(1,'Anchor Point','spi',nums(['91.7','128.6','0.0'])),
prop(1,'X Position','spi',nums(['-0.0'])),
prop(1,'Y Position','spi',nums(['-0.0'])),
prop(1,'Z Position','spi',nums(['120.0'])),
prop(1,'Orientation','spi',nums(['0.0°','90.0°','0.0°'])),
prop(1,'Y Rotation','spi','<button>0</button>x<button>-90.0°</button>'));
[[7,'5. Controller',['side 1','side 2','side 3','side 4','bottom']],[12,0,RE,'Controller 2'],[13,'12. Controller 2',['top 2','side 5','side 6','side 7','side 8','bottom 2']],[19,0,RE,'Controller 3'],[20,'19. Controller 3',['top 3','side 9','side 10','side 11','side 12','bottom 3']],[26,0,PI,'Controller 6'],[27,'26. Controller 6',['top 6','side 21','side 22','side 23','side 24']]].forEach(g=>{
 if(g[1]) g[2].forEach((nm,i)=>out.push(layer(g[0]+i,nm,BL,'s',g[1])));
 else out.push(layer(g[0],g[3],g[2],'n','None'));
});
document.getElementById('rows').innerHTML=out.join('');
</script>
</body>
</html>
